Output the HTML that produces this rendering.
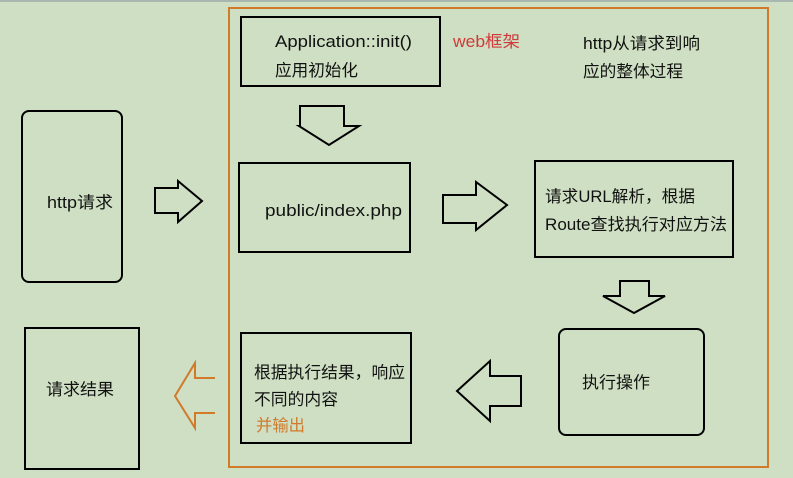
<!DOCTYPE html>
<html><head><meta charset="utf-8"><style>
html,body{margin:0;padding:0;background:#cfdfc3;}
svg{display:block}
text{font-family:"Liberation Sans","Noto Sans CJK SC",sans-serif;font-size:16.5px;fill:#111}
</style></head><body>
<svg width="793" height="478" viewBox="0 0 793 478" xmlns="http://www.w3.org/2000/svg">
<rect x="0" y="0" width="793" height="478" fill="#cfdfc3"/>
<rect x="0" y="0" width="793" height="2" fill="#a9b7b0"/>
<rect x="229" y="8" width="539" height="459" fill="none" stroke="#d07a2a" stroke-width="2"/>
<g fill="none" stroke="#000" stroke-width="2">
<rect x="241" y="17" width="199" height="69"/>
<rect x="22" y="111" width="100" height="171" rx="7"/>
<rect x="239" y="163" width="171" height="89"/>
<rect x="535" y="161" width="198" height="96"/>
<rect x="559" y="329" width="145" height="106" rx="7"/>
<rect x="241" y="333" width="170" height="110"/>
<rect x="25" y="328" width="114" height="141"/>
<path d="M300 106 H344 V126 H359 L329 145 L299 126 H300 Z"/>
<path d="M155 188 H178 V181 L202 201 L178 222 V213 H155 Z"/>
<path d="M443 195 H476 V182 L507 205 L476 230 V223 H443 Z"/>
<path d="M620 281 H649 V296 H665 L634 313 L603 296 H620 Z"/>
<path d="M521 376 H490 V361 L457 391 L490 421 V406 H521 Z"/>
</g>
<path d="M215 378 H195 V363 L175 396 L195 428 V413 H215" fill="none" stroke="#d07a2a" stroke-width="2"/>
<g lengthAdjust="spacingAndGlyphs">
<text x="275" y="47" textLength="137" lengthAdjust="spacingAndGlyphs">Application::init()</text>
<text x="275" y="76" textLength="83" lengthAdjust="spacingAndGlyphs">应用初始化</text>
<text x="453" y="47" textLength="67" lengthAdjust="spacingAndGlyphs" style="fill:#d03a3a">web框架</text>
<text x="583" y="49" textLength="117" lengthAdjust="spacingAndGlyphs">http从请求到响</text>
<text x="583" y="77" textLength="100" lengthAdjust="spacingAndGlyphs">应的整体过程</text>
<text x="47" y="208" textLength="66" lengthAdjust="spacingAndGlyphs">http请求</text>
<text x="265" y="216" textLength="137" lengthAdjust="spacingAndGlyphs">public/index.php</text>
<text x="545" y="202" textLength="150" lengthAdjust="spacingAndGlyphs">请求URL解析，根据</text>
<text x="545" y="230" textLength="182" lengthAdjust="spacingAndGlyphs">Route查找执行对应方法</text>
<text x="582" y="388" textLength="68" lengthAdjust="spacingAndGlyphs">执行操作</text>
<text x="254" y="378" textLength="151" lengthAdjust="spacingAndGlyphs">根据执行结果，响应</text>
<text x="254" y="405" textLength="84" lengthAdjust="spacingAndGlyphs">不同的内容</text>
<text x="256" y="431" textLength="49" lengthAdjust="spacingAndGlyphs" style="fill:#d07a2a">并输出</text>
<text x="46" y="395" textLength="68" lengthAdjust="spacingAndGlyphs">请求结果</text>
</g>
</svg>
</body></html>
